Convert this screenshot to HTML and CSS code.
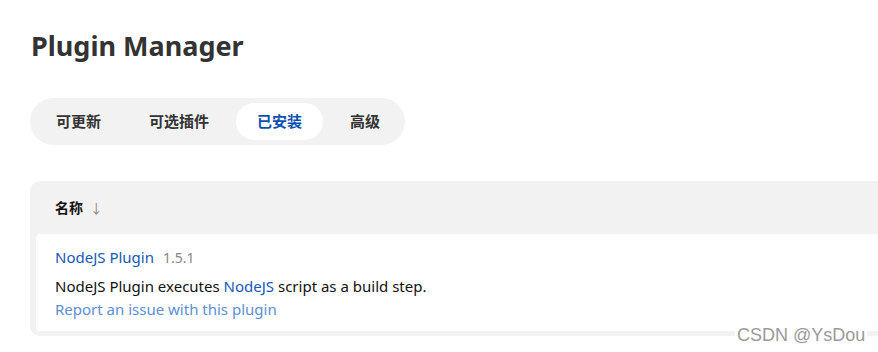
FILE: index.html
```html
<!DOCTYPE html>
<html>
<head>
  <title>Plugin Manager</title>
  <link rel="stylesheet" href="styles.css">
</head>
<body>
  <div class="page">
    <h1 class="title">Plugin Manager</h1>

    <div class="tabs">
      <a class="tab">可更新</a>
      <a class="tab">可选插件</a>
      <a class="tab active">已安装</a>
      <a class="tab">高级</a>
    </div>

    <div class="plugin-table">
      <div class="table-head">名称 <span class="sort">↓</span></div>
      <div class="plugin-row">
        <div class="plugin-name">
          <a href="#">NodeJS Plugin</a>
          <span class="version">1.5.1</span>
        </div>
        <div class="plugin-desc">NodeJS Plugin executes <a href="#">NodeJS</a> script as a build step.</div>
        <a class="report" href="#">Report an issue with this plugin</a>
      </div>
    </div>
  </div>
  <div class="watermark">CSDN @YsDou</div>
</body>
</html>
```

FILE: styles.css
```css
body {
  margin: 0;
  font-family: "Noto Sans", "Noto Sans CJK SC", sans-serif;
  color: #333;
  background: #fff;
  overflow: hidden;
}
.page {
  padding: 26px 0 0 30px;
}
.title {
  margin: 0 0 0 1px;
  font-size: 27px;
  line-height: 40px;
  font-weight: bold;
  color: #333;
}
.tabs {
  display: inline-flex;
  align-items: center;
  gap: 6px;
  margin-top: 32px;
  padding: 5px 4px 5px 5px;
  background: #f2f2f2;
  border-radius: 24px;
}
.tab {
  padding: 0 21px;
  height: 37px;
  line-height: 37px;
  font-size: 15px;
  font-weight: bold;
  color: #333;
  border-radius: 19px;
}
.tab.active {
  background: #fff;
  color: #0b4fb3;
}
.plugin-table {
  margin-top: 36px;
  background: #f2f2f2;
  border-radius: 10px 0 0 10px;
  padding: 0 0 5px 6px;
}
.table-head {
  height: 53px;
  line-height: 53px;
  padding-left: 19px;
  font-size: 14px;
  font-weight: bold;
  color: #111;
}
.sort {
  font-weight: normal;
  font-size: 13px;
  color: #888;
  margin-left: 3px;
}
.plugin-row {
  background: #fff;
  border-radius: 4px 0 0 4px;
  padding: 12px 0 11px 19px;
  font-size: 15px;
}
.plugin-row a {
  color: #1558b8;
  text-decoration: none;
}
.plugin-name {
  line-height: 22px;
}
.version {
  color: #888;
  margin-left: 5px;
  font-size: 14px;
}
.plugin-desc {
  margin-top: 6px;
  line-height: 22px;
  color: #111;
}
.plugin-row a.report {
  display: block;
  margin-top: 1px;
  line-height: 22px;
  color: #5b8fd6;
}
.watermark {
  position: absolute;
  left: 735px;
  top: 325px;
  font-family: "Liberation Sans", sans-serif;
  font-size: 18px;
  color: #9a9a9a;
  background: #fff;
  padding: 0 2px;
}
```
